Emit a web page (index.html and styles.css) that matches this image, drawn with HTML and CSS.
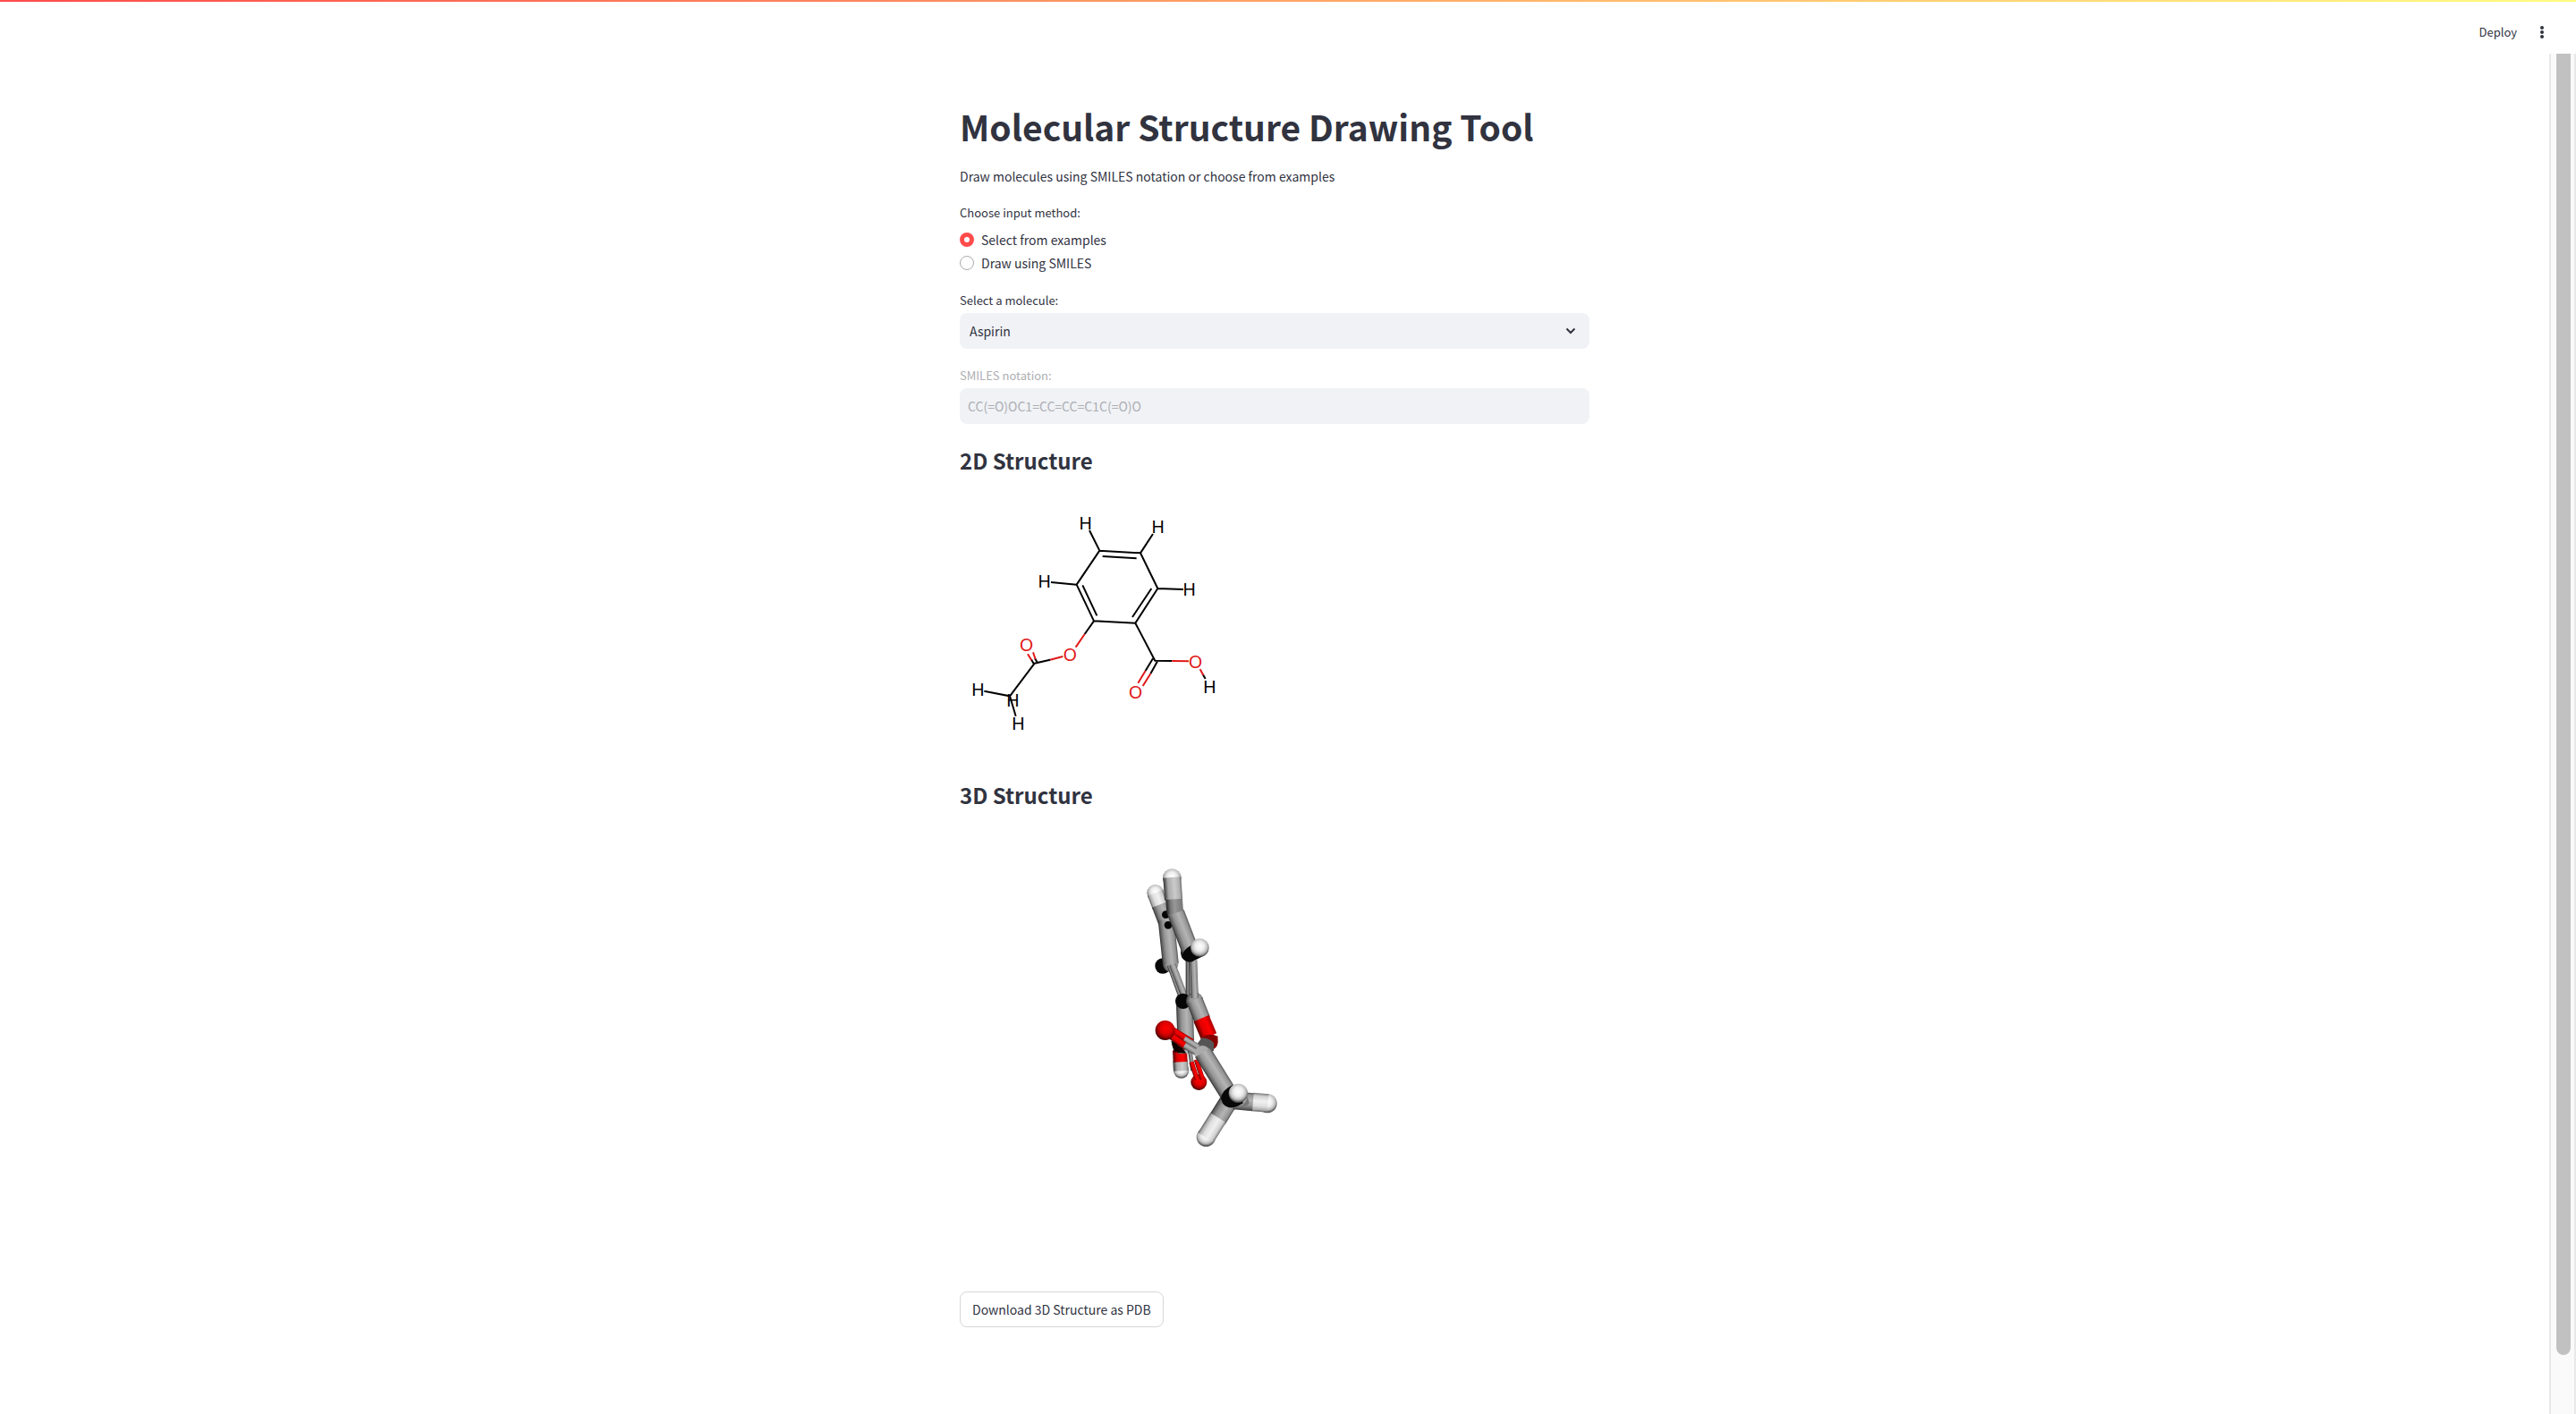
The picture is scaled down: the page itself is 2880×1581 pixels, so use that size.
FILE: index.html
```html
<!DOCTYPE html>
<html lang="en">
<head>
<meta charset="utf-8">
<meta name="viewport" content="width=device-width, initial-scale=1">
<title>Molecular Structure Drawing Tool</title>
<link rel="stylesheet" href="styles.css">
</head>
<body>
<div class="decoration"></div>
<header class="toolbar">
  <button class="deploy" type="button">Deploy</button>
  <button class="menu" type="button" aria-label="Main menu">
    <svg viewBox="0 0 4 14" width="4" height="14"><circle cx="2" cy="2" r="2"/><circle cx="2" cy="7" r="2"/><circle cx="2" cy="12" r="2"/></svg>
  </button>
</header>
<div class="view">
  <main class="content">
    <h1>Molecular Structure Drawing Tool</h1>
    <p class="intro">Draw molecules using SMILES notation or choose from examples</p>

    <fieldset class="methods">
      <legend>Choose input method:</legend>
      <label class="method"><input type="radio" name="method" checked>Select from examples</label>
      <label class="method"><input type="radio" name="method">Draw using SMILES</label>
    </fieldset>

    <div class="field">
      <label for="molecule">Select a molecule:</label>
      <div class="select-box">
        <select id="molecule"><option>Aspirin</option></select>
        <svg class="chevron" viewBox="0 0 12 8" width="12" height="8"><path d="M1.500 1.500 6 6l4.500-4.500"/></svg>
      </div>
    </div>

    <div class="field disabled">
      <label for="smiles">SMILES notation:</label>
      <input id="smiles" type="text" value="CC(=O)OC1=CC=CC=C1C(=O)O" disabled>
    </div>

    <h3>2D Structure</h3>
    <svg class="flat" viewBox="39 18 900 900" role="img" aria-label="Aspirin, 2D structure">
      <g class="bond">
        <path d="M508 227 431 341 489 463 628 470 703 354 645 235ZM474 159 508 227M645 235 687 171M518 246 632 253M451 343 499 445M618 450 682 354M431 341 345 333M703 354 789 357M628 470 694 596 751 597M489 463 458 507M687 589 662 630M704 595 679 640M342 593 290 605 207 715 121 698M207 715 227 782M291 588 300 604M279 592 289 610M854 641 863 657"/>
      </g>
      <g class="bond oxygen">
        <path d="M458 507 428 551M385 582 342 593M751 597 807 598M662 630 637 671M679 640 653 681M285 568 293 591M267 574 280 595M845 625 856 645"/>
      </g>
      <g class="atom">
        <text x="461" y="155">H</text><text x="704" y="168">H</text><text x="323" y="352">H</text><text x="809" y="378">H</text>
        <text x="877" y="705">H</text><text x="100" y="714">H</text><text x="217" y="750">H</text><text x="235" y="829">H</text>
      </g>
      <g class="atom oxygen">
        <text x="263" y="565">O</text><text x="409" y="598">O</text><text x="830" y="620">O</text><text x="629" y="724">O</text>
      </g>
    </svg>

    <h3>3D Structure</h3>
    <svg class="solid" viewBox="-561 -90 1800 1518" role="img" aria-label="Aspirin, 3D structure">
      <defs>
        <linearGradient id="carbon" x2="0" y2="1"><stop offset="0" stop-color="#555"/><stop offset=".12" stop-color="#939393"/><stop offset=".4" stop-color="#b4b4b4"/><stop offset=".7" stop-color="#969696"/><stop offset=".9" stop-color="#626262"/><stop offset="1" stop-color="#303030"/></linearGradient>
        <linearGradient id="shade" x2="0" y2="1"><stop offset="0" stop-color="#777"/><stop offset=".5" stop-color="#989898"/><stop offset=".75" stop-color="#777"/><stop offset="1" stop-color="#222"/></linearGradient>
        <linearGradient id="hydrogen" x2="0" y2="1"><stop offset="0" stop-color="#777"/><stop offset=".15" stop-color="#d0d0d0"/><stop offset=".42" stop-color="#f0f0f0"/><stop offset=".7" stop-color="#dedede"/><stop offset=".9" stop-color="#aaa"/><stop offset="1" stop-color="#555"/></linearGradient>
        <linearGradient id="hydrogen-dim" x2="0" y2="1"><stop offset="0" stop-color="#666"/><stop offset=".12" stop-color="#b0b0b0"/><stop offset=".4" stop-color="#cbcbcb"/><stop offset=".75" stop-color="#aaa"/><stop offset="1" stop-color="#333"/></linearGradient>
        <linearGradient id="red" x2="0" y2="1"><stop offset="0" stop-color="#a00"/><stop offset=".3" stop-color="#f00"/><stop offset=".7" stop-color="#dc0000"/><stop offset="1" stop-color="#500"/></linearGradient>
        <radialGradient id="white-ball" cx=".5" cy=".42" r=".56"><stop offset="0" stop-color="#fff"/><stop offset=".45" stop-color="#ececec"/><stop offset=".75" stop-color="#bcbcbc"/><stop offset="1" stop-color="#4a4a4a"/></radialGradient>
        <radialGradient id="red-ball" cx=".55" cy=".4" r=".6"><stop offset="0" stop-color="#f00"/><stop offset=".5" stop-color="#df0000"/><stop offset=".8" stop-color="#920000"/><stop offset="1" stop-color="#300"/></radialGradient>
        <radialGradient id="gray-ball" cx=".6" cy=".5" r=".6"><stop offset="0" stop-color="#aaa"/><stop offset=".6" stop-color="#939393"/><stop offset="1" stop-color="#444"/></radialGradient>
      </defs>
      <!-- ring, far side -->
      <circle cx="95" cy="145" r="28" fill="url(#white-ball)"/>
      <rect width="48" height="56" y="-28" fill="url(#hydrogen)" transform="translate(95 145) rotate(69)"/>
      <rect width="62" height="56" y="-28" fill="url(#carbon)" transform="translate(110 184) rotate(69)"/>
      <circle cx="120" cy="390" r="26" fill="#080808"/>
      <circle cx="146" cy="384" r="26" fill="url(#gray-ball)"/>
      <rect width="148" height="54" y="-27" fill="url(#carbon)" transform="translate(131 236) rotate(84)"/>
      <circle cx="130" cy="218" r="13" fill="#050505"/>
      <circle cx="138" cy="253" r="13" fill="#050505"/>
      <rect width="125" height="13" y="-7" fill="url(#shade)" transform="translate(140 388) rotate(70)"/>
      <rect width="125" height="22" y="-11" fill="url(#carbon)" transform="translate(152 385) rotate(69)"/>
      <rect width="120" height="22" y="-11" fill="url(#shade)" transform="translate(208 370) rotate(90)"/>
      <rect width="2" height="110" x="208" y="376" fill="#222"/>
      <!-- carboxyl group -->
      <path d="M148 642 190 650 195 690 160 682Z" fill="#080808"/>
      <circle cx="182" cy="741" r="26" fill="url(#white-ball)"/>
      <rect width="34" height="50" y="-25" fill="url(#hydrogen-dim)" transform="translate(179 708) rotate(87)"/>
      <rect width="40" height="48" y="-24" fill="url(#red)" transform="translate(177 672) rotate(87)"/>
      <rect width="164" height="56" y="-28" fill="url(#carbon)" transform="translate(193 520) rotate(88)"/>
      <path d="M150 652C176 656 190 666 198 684L159 679Z" fill="#120000"/>
      <rect width="70" height="14" y="-7" fill="url(#shade)" transform="translate(211 672) rotate(82)"/>
      <circle cx="241" cy="780" r="27" fill="url(#red-ball)"/>
      <rect width="62" height="16" y="-8" fill="url(#red)" transform="translate(216 712) rotate(72)"/>
      <rect width="70" height="16" y="-8" fill="url(#red)" transform="translate(232 704) rotate(72)"/>
      <!-- ring, near side -->
      <circle cx="188" cy="508" r="26" fill="#060606"/>
      <circle cx="227" cy="507" r="29" fill="url(#gray-ball)"/>
      <rect width="72" height="56" y="-28" fill="url(#carbon)" transform="translate(226 504) rotate(68)"/>
      <rect width="128" height="24" y="-12" fill="url(#carbon)" transform="translate(223 370) rotate(88)"/>
      <circle cx="151" cy="95" r="31" fill="url(#white-ball)"/>
      <rect width="75" height="60" y="-30" fill="url(#hydrogen-dim)" transform="translate(151 93) rotate(86)"/>
      <circle cx="164" cy="214" r="28" fill="url(#gray-ball)"/>
      <rect width="50" height="56" y="-28" fill="url(#shade)" transform="translate(158 166) rotate(86)"/>
      <circle cx="209" cy="346" r="29" fill="#111"/>
      <rect width="142" height="58" y="-29" fill="url(#carbon)" transform="translate(164 212) rotate(69)"/>
      <path d="M183 360Q187 336 216 320L250 300 260 355 218 376Q197 381 183 360Z" fill="#080808"/>
      <circle cx="244" cy="329" r="31" fill="url(#white-ball)"/>
      <!-- ester group -->
      <circle cx="277" cy="645" r="28" fill="#9b0000"/>
      <rect width="66" height="56" y="-28" fill="url(#red)" transform="translate(249 566) rotate(67)"/>
      <path d="M248 633Q271 611 305 626L303 652 288 673 263 642Z" fill="#850000"/>
      <path d="M231 657 251 631Q276 632 291 648V674L270 690Z" fill="#555"/>
      <rect width="80" height="22" y="-11" fill="url(#red)" transform="translate(150 603) rotate(32)"/>
      <rect width="55" height="20" y="-10" fill="url(#carbon)" transform="translate(192 634) rotate(31)"/>
      <rect width="72" height="24" y="-12" fill="url(#red)" transform="translate(142 620) rotate(36)"/>
      <rect width="60" height="22" y="-11" fill="url(#carbon)" transform="translate(193 656) rotate(31)"/>
      <circle cx="128" cy="606" r="33" fill="url(#red-ball)"/>
      <!-- methyl group -->
      <circle cx="253" cy="684" r="27" fill="#aaa"/>
      <rect width="184" height="60" y="-30" fill="url(#carbon)" transform="translate(254 680) rotate(58)"/>
      <rect width="80" height="62" y="-31" fill="url(#carbon)" transform="translate(345 838) rotate(122)"/>
      <circle cx="265" cy="964" r="32" fill="url(#white-ball)"/>
      <rect width="79" height="62" y="-31" fill="url(#hydrogen)" transform="translate(306 899) rotate(122)"/>
      <circle cx="471" cy="851" r="32" fill="url(#white-ball)"/>
      <rect width="52" height="62" y="-31" fill="url(#hydrogen)" transform="translate(421 846) rotate(5)"/>
      <rect width="65" height="60" y="-30" fill="url(#carbon)" transform="translate(358 841) rotate(5)"/>
      <path d="M315 835Q318 807 353 790L390 850 370 861Q339 873 321 851Z" fill="#080808"/>
      <path d="M376 861Q399 856 404 827L410 850Q400 866 376 861Z" fill="#777"/>
      <circle cx="373" cy="817" r="32" fill="url(#white-ball)"/>
    </svg>

    <button class="download" type="button">Download 3D Structure as PDB</button>
  </main>
  <div class="scroll-track"><div class="scroll-thumb"></div></div>
</div>
</body>
</html>
```
FILE: styles.css
```css
* { box-sizing: border-box; }

body {
  margin: 0;
  min-height: 100vh;
  display: flex;
  flex-direction: column;
  background: #fff;
  color: #31333f;
  font: 14px/24px "Noto Sans CJK SC", "Noto Sans", sans-serif;
}

button, input, select { font: inherit; color: inherit; }

.decoration { height: 2px; background: linear-gradient(90deg, #ff4b4b, #fffd80); }

.toolbar {
  height: 58px;
  padding: 0 36px 12px 0;
  display: flex;
  align-items: flex-end;
  justify-content: flex-end;
  gap: 26px;
}

.toolbar button {
  height: 24px;
  padding: 0;
  border: 0;
  background: none;
  display: flex;
  align-items: center;
}

.toolbar .deploy { font-size: 13px; }
.menu svg { fill: #31333f; }

.view { flex: 1; display: grid; grid-template-columns: 1fr 30px; }

.content {
  width: 100%;
  max-width: 736px;
  margin: 0 auto;
  padding: 36px 16px 96px;
}

h1, h3, p { margin: 0; }
h1 { padding: 19px 0 17px; font-size: 39px; line-height: 53px; font-weight: 700; }
h3 { padding: 4px 0 14px; font-size: 24px; line-height: 34px; font-weight: 700; }

.methods { margin: 19px 0; padding: 0; border: 0; }
.methods legend, .field label { display: block; padding: 0; font-size: 13px; line-height: 20px; }
.methods legend { margin-bottom: 7px; }
.method { height: 26px; display: flex; align-items: center; gap: 8px; }

.method input {
  appearance: none;
  width: 16px;
  height: 16px;
  margin: 0;
  border: 1px solid #aaabb0;
  border-radius: 50%;
  background: #fff;
}
.method input:checked { border: 5px solid #ff4b4b; }

.field { margin-bottom: 20px; }
.field label { margin-bottom: 4px; }

.select-box { display: grid; align-items: center; }
.select-box > * { grid-area: 1 / 1; }
.select-box select, .field input {
  appearance: none;
  display: block;
  width: 100%;
  height: 40px;
  border: 0;
  border-radius: 8px;
  background: #f0f2f6;
}
.select-box select { padding: 0 11px; }
.field input { padding: 0 9px; }
.chevron {
  justify-self: end;
  margin-right: 15px;
  fill: none;
  stroke: #31333f;
  stroke-width: 2;
  pointer-events: none;
}
.disabled label, .disabled input { color: #adaeb2; }

.flat { display: block; width: 300px; height: 300px; margin-bottom: 22px; }
.bond { fill: none; stroke: #000; stroke-width: 6; }
.bond.oxygen { stroke: #e01818; }
.atom { font: 60px "Noto Sans", sans-serif; text-anchor: middle; }
.atom.oxygen { fill: #e01818; }

.solid { display: block; width: 600px; max-width: 100%; height: 506px; }

.download {
  height: 40px;
  margin-top: 18px;
  padding: 0 13px;
  border: 1px solid #d6d6d9;
  border-radius: 8px;
  background: #fff;
}

.scroll-track {
  padding: 0 4px 66px 6px;
  border: solid #e8e8e8;
  border-width: 0 2px;
  background: #fafafa;
  display: flex;
}
.scroll-thumb { flex: 1; border-radius: 0 0 8px 8px; background: #c1c1c1; }
```
